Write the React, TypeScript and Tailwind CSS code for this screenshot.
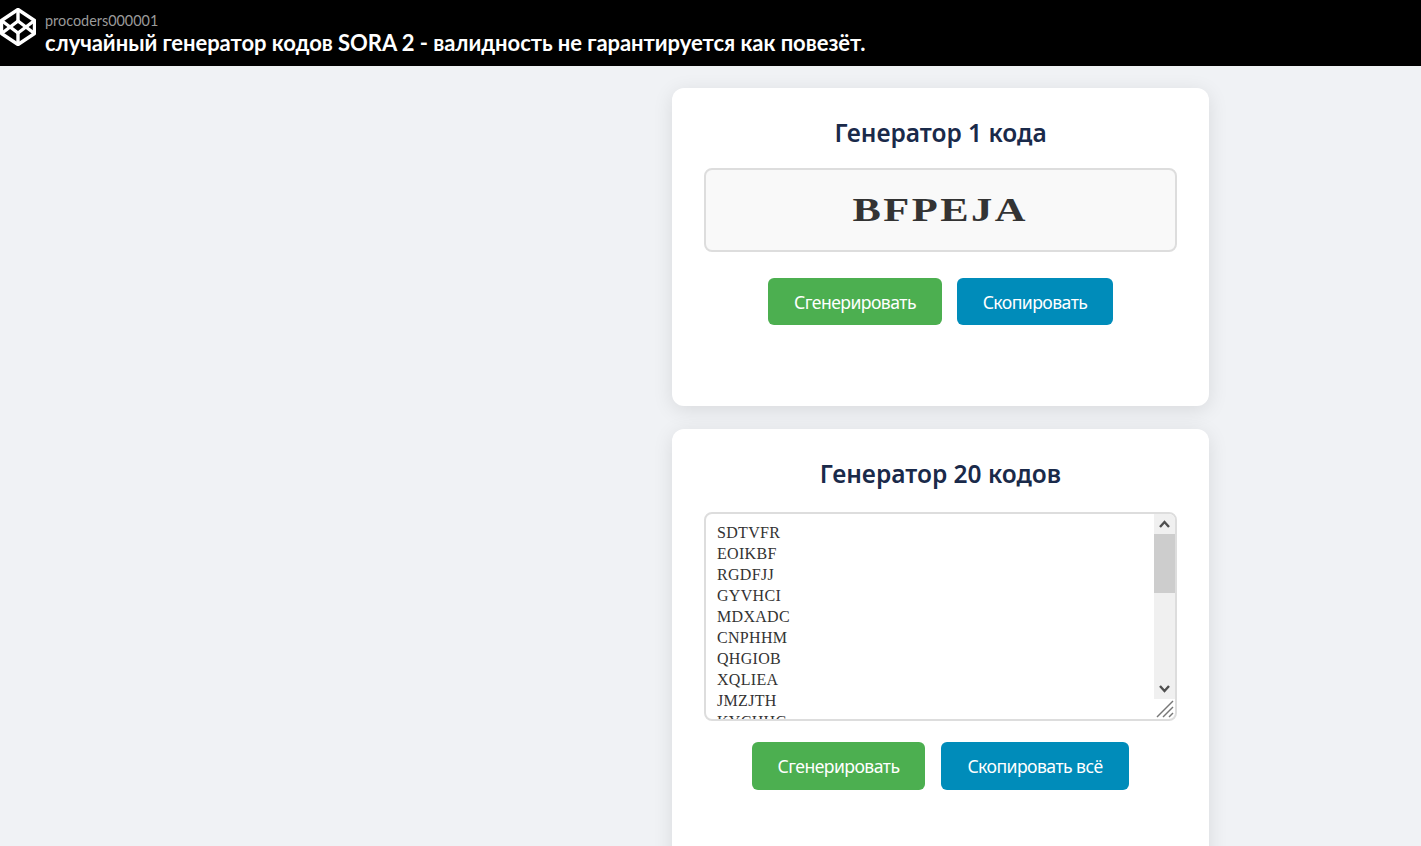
const codes = ["SDTVFR", "EOIKBF", "RGDFJJ", "GYVHCI", "MDXADC", "CNPHHM", "QHGIOB", "XQLIEA", "JMZJTH", "KYCHHC", "PLWQRT", "ZNBVAS"]

function Logo() {
  return (
    <svg width="36" height="38" viewBox="0 0 36 38" fill="none" stroke="#fff" strokeWidth="3.4" strokeLinejoin="round" className="shrink-0 self-start mt-[8px]">
      <polygon points="18,1.5 34.5,12.5 34.5,25.5 18,36.5 1.5,25.5 1.5,12.5" />
      <polyline points="1.5,12.5 18,25 34.5,12.5" />
      <polyline points="1.5,25.5 18,13 34.5,25.5" />
      <line x1="18" y1="1.5" x2="18" y2="13" />
      <line x1="18" y1="25" x2="18" y2="36.5" />
    </svg>
  )
}

function ActionButton({ label, color, width, height }: { label: string; color: string; width: string; height: string }) {
  return (
    <button className={`${color} ${width} ${height} pt-px rounded-md text-white text-[17.6px] tracking-[-0.55px] font-['Noto_Sans',sans-serif]`}>
      {label}
    </button>
  )
}

export default function App() {
  return (
    <div className="h-screen overflow-hidden bg-[#f0f2f5]">
      <header className="h-[66px] bg-black flex items-center gap-[9px] font-['Lato',sans-serif]">
        <Logo />
        <div className="flex flex-col pt-[3px]">
          <span className="text-[14.4px] leading-[16px] text-[#9a9a9a]">procoders000001</span>
          <h1 className="text-[22px] leading-[28px] font-bold text-white tracking-[-0.05px]">
            случайный генератор кодов SORA 2 - валидность не гарантируется как повезёт.
          </h1>
        </div>
      </header>

      <main className="flex flex-col gap-[23px] pt-[22px] pl-[672px]">
        <section className="w-[537px] h-[318px] shrink-0 bg-white rounded-xl px-8 pt-[28px] shadow-[0_4px_20px_rgba(0,0,0,0.1)] font-['Noto_Sans',sans-serif]">
          <h2 className="text-center text-[24.5px] leading-[33px] font-semibold text-[#1a2a4a]">Генератор 1 кода</h2>
          <div className="mt-[19px] h-[84px] pb-[2px] border-2 border-[#dddddd] rounded-lg bg-[#f9f9f9] flex items-center justify-center font-['Liberation_Serif',serif] font-bold text-[34px] text-[#333333]">
            <span className="inline-block scale-x-[1.25] tracking-[2px]">BFPEJA</span>
          </div>
          <div className="mt-[26px] flex justify-center gap-[15px]">
            <ActionButton label="Сгенерировать" color="bg-[#4caf50]" width="w-[174px]" height="h-[47px]" />
            <ActionButton label="Скопировать" color="bg-[#008cba]" width="w-[156px]" height="h-[47px]" />
          </div>
        </section>

        <section className="w-[537px] h-[500px] shrink-0 bg-white rounded-xl px-8 pt-[28px] shadow-[0_4px_20px_rgba(0,0,0,0.1)] font-['Noto_Sans',sans-serif]">
          <h2 className="text-center text-[24.5px] leading-[33px] font-semibold text-[#1a2a4a]">Генератор 20 кодов</h2>
          <div className="relative mt-[22px] h-[209px] border-2 border-[#dddddd] rounded-lg overflow-hidden">
            <textarea
              readOnly
              value={codes.join("\n")}
              className="block w-full h-full resize-none overflow-hidden pl-[11px] pt-[8px] font-['Liberation_Serif',serif] text-[16px] tracking-[0.3px] leading-[21px] text-[#333333] outline-none"
            />
            <div className="absolute right-0 top-0 bottom-[20px] w-[21px] bg-[#f0f0f0] flex flex-col">
              <svg viewBox="0 0 21 20" className="w-[21px] h-[20px] shrink-0" fill="none" stroke="#505050" strokeWidth="2.4">
                <polyline points="6,13 10.5,8 15,13" />
              </svg>
              <div className="h-[59px] bg-[#cdcdcd] shrink-0" />
              <div className="flex-1" />
              <svg viewBox="0 0 21 20" className="w-[21px] h-[20px] shrink-0" fill="none" stroke="#505050" strokeWidth="2.4">
                <polyline points="6,7 10.5,12 15,7" />
              </svg>
            </div>
            <svg viewBox="0 0 20 20" className="absolute right-0 bottom-0 w-[20px] h-[20px]" stroke="#777777" strokeWidth="1.4">
              <line x1="2" y1="18" x2="18" y2="2" />
              <line x1="8" y1="18" x2="18" y2="8" />
              <line x1="14" y1="18" x2="18" y2="14" />
            </svg>
          </div>
          <div className="mt-[21px] flex justify-center gap-4">
            <ActionButton label="Сгенерировать" color="bg-[#4caf50]" width="w-[173px]" height="h-[48px]" />
            <ActionButton label="Скопировать всё" color="bg-[#008cba]" width="w-[188px]" height="h-[48px]" />
          </div>
        </section>
      </main>
    </div>
  )
}
